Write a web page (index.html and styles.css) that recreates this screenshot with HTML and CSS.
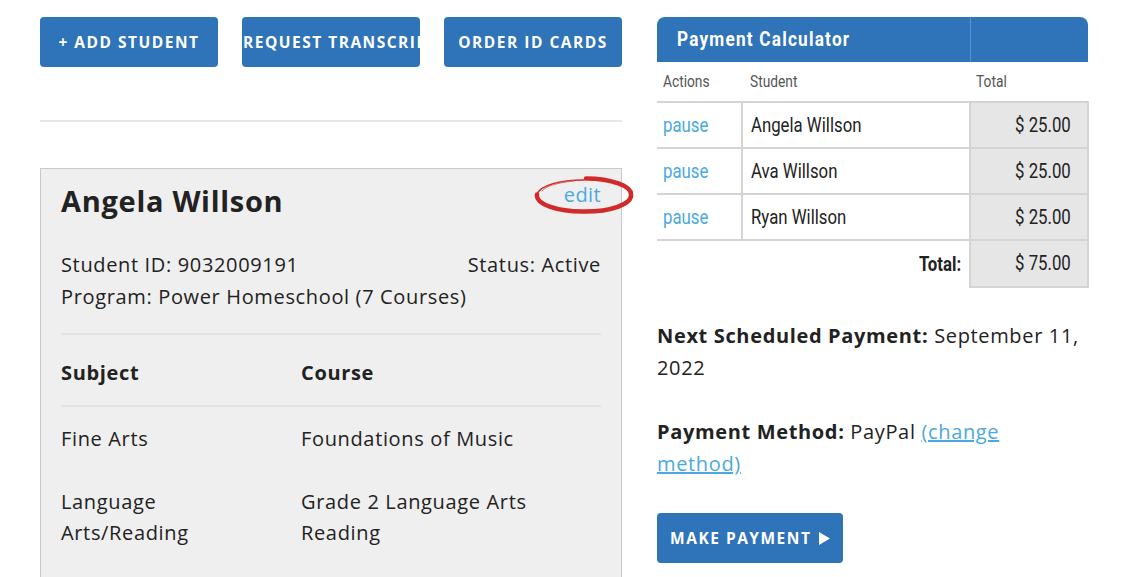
FILE: index.html
```html
<!DOCTYPE html>
<html>
<head>
<meta charset="utf-8">
<link rel="stylesheet" href="styles.css">
</head>
<body>
<div class="page">
  <div class="left">
    <div class="actions">
      <a class="btn">+ ADD STUDENT</a>
      <a class="btn">REQUEST TRANSCRIPT</a>
      <a class="btn">ORDER ID CARDS</a>
    </div>
    <div class="rule"></div>
    <div class="card">
      <div class="card-head">
        <h2 class="name">Angela Willson</h2>
        <a class="edit">edit
          <svg class="circle" width="100" height="38" viewBox="0 0 100 38">
            <path d="M52,2.5 A46,16 0 0 1 97,19 A46,16 0 0 1 50,35.5 A46,16 0 0 1 3,18.5" fill="none" stroke="#d22a2a" stroke-width="4.5" stroke-linecap="round"/>
            <path d="M3.5,18 A46,15 0 0 1 50,4" fill="none" stroke="#d22a2a" stroke-width="1.6" stroke-linecap="round"/>
            <path d="M8,15 A44,13 0 0 1 40,5" fill="none" stroke="#e06a6a" stroke-width="1" stroke-linecap="round"/>
          </svg>
        </a>
      </div>
      <div class="info">
        <div class="info-row"><span>Student ID: 9032009191</span><span>Status: Active</span></div>
        <div class="info-row"><span>Program: Power Homeschool (7 Courses)</span></div>
      </div>
      <div class="courses">
        <div class="course-row head"><span>Subject</span><span>Course</span></div>
        <div class="course-row"><span>Fine Arts</span><span>Foundations of Music</span></div>
        <div class="course-row"><span>Language<br>Arts/Reading</span><span>Grade 2 Language Arts<br>Reading</span></div>
      </div>
    </div>
  </div>
  <div class="right">
    <table class="calc">
      <thead>
        <tr class="title"><th colspan="2"><span class="sq">Payment Calculator</span></th><th class="title-end"></th></tr>
        <tr class="cols"><th class="c-act"><span class="sq">Actions</span></th><th class="c-stu"><span class="sq">Student</span></th><th class="c-tot"><span class="sq">Total</span></th></tr>
      </thead>
      <tbody>
        <tr><td class="act"><a class="sq">pause</a></td><td class="stu"><span class="sq">Angela Willson</span></td><td class="tot"><span class="sq r">$ 25.00</span></td></tr>
        <tr><td class="act"><a class="sq">pause</a></td><td class="stu"><span class="sq">Ava Willson</span></td><td class="tot"><span class="sq r">$ 25.00</span></td></tr>
        <tr><td class="act"><a class="sq">pause</a></td><td class="stu"><span class="sq">Ryan Willson</span></td><td class="tot"><span class="sq r">$ 25.00</span></td></tr>
        <tr class="sum"><td colspan="2" class="sum-label"><span class="sq r">Total:</span></td><td class="tot"><span class="sq r">$ 75.00</span></td></tr>
      </tbody>
    </table>
    <p class="detail"><b>Next Scheduled Payment:</b> September 11, 2022</p>
    <p class="detail"><b>Payment Method:</b> PayPal <a class="link">(change method)</a></p>
    <a class="btn pay">MAKE PAYMENT <svg class="tri" width="11" height="13" viewBox="0 0 11 13"><path d="M0,0 L11,6.5 L0,13 Z" fill="#fff"/></svg></a>
  </div>
</div>
</body>
</html>
```
FILE: styles.css
```css
* { box-sizing: border-box; }
html, body { margin: 0; padding: 0; background: #fff; }
body {
  font-family: "Open Sans", "DejaVu Sans", sans-serif;
  color: #222;
  overflow: hidden;
  height: 577px;
}
.page {
  display: flex;
  gap: 35px;
  padding: 17px 0 0 40px;
}
.left { width: 582px; flex: none; }
.right { width: 432px; flex: none; }

.actions { display: flex; gap: 24px; }
.btn {
  display: block;
  width: 178px;
  height: 50px;
  line-height: 50px;
  background: #2f73b8;
  border-radius: 4px;
  color: #fff;
  font-weight: 700;
  font-size: 15.5px;
  letter-spacing: 1.5px;
  text-align: center;
  white-space: nowrap;
  overflow: hidden;
  padding: 0 1px;
}
.rule {
  margin-top: 53px;
  border-top: 2px solid #e6e6e6;
}
.card {
  margin-top: 46px;
  border: 1px solid #c9c9c9;
  background: #efefef;
  padding: 12px 20px 40px 20px;
  height: 420px;
}
.card-head {
  display: flex;
  justify-content: space-between;
  align-items: flex-start;
}
.name {
  margin: 0;
  font-size: 29px;
  line-height: 40px;
  font-weight: 700;
  letter-spacing: 0.7px;
  color: #222;
}
.edit {
  position: relative;
  color: #4aa9e2;
  font-size: 20px;
  line-height: 26px;
  margin-top: 1px;
  letter-spacing: 0.4px;
}
.circle {
  position: absolute;
  left: -30px;
  top: -6px;
}
.info { margin-top: 28px; font-size: 20px; line-height: 32px; }
.info-row { display: flex; justify-content: space-between; }
.info, .courses { letter-spacing: 0.65px; }
.info { padding-bottom: 20px; border-bottom: 2px solid #e2e2e2; }
.courses { font-size: 20px; line-height: 31px; }
.course-row { display: grid; grid-template-columns: 240px 1fr; padding: 16px 0; }
.course-row.head {
  font-weight: 700;
  padding: 22px 0 17px;
  border-bottom: 2px solid #e2e2e2;
}

.sq {
  display: inline-block;
  transform: scaleX(0.86);
  transform-origin: left center;
  white-space: nowrap;
}
.sq.r { transform-origin: right center; }
.calc {
  width: 432px;
  border-collapse: collapse;
  font-family: "Roboto", "Liberation Sans", sans-serif;
  color: #222;
}
.calc .title th {
  background: #2f73b8;
  height: 45px;
  color: #fff;
  font-size: 20px;
  font-weight: 700;
  letter-spacing: 1.4px;
  text-align: left;
  padding: 0 0 2px 20px;
}
.calc .title th:first-child { border-top-left-radius: 8px; border-right: 1px solid #5b92cc; }
.calc .title th.title-end { border-top-right-radius: 8px; padding: 0; }
.calc .cols th {
  height: 40px;
  font-weight: 400;
  font-size: 16px;
  color: #555;
  text-align: left;
  padding: 0 0 0 6px;
  border-bottom: 2px solid #d4d4d4;
}
.calc .cols th.c-stu { padding-left: 8px; }
.c-act { width: 85px; }
.c-stu { width: 229px; }
.c-tot { width: 118px; }
.calc td {
  height: 46px;
  font-size: 19.5px;
  border-bottom: 2px solid #d4d4d4;
  padding: 0;
}
.calc td.act { padding-left: 6px; }
.calc td.act a { color: #4aa9e2; }
.calc td.stu { padding-left: 8px; border-left: 2px solid #d4d4d4; }
.calc td.tot {
  background: #e6e6e6;
  text-align: right;
  padding-right: 16px;
  border-left: 2px solid #d4d4d4;
  border-right: 2px solid #d4d4d4;
}
.calc .sum td { height: 47px; }
.calc .sum td.sum-label {
  text-align: right;
  font-weight: 700;
  padding-right: 8px;
  border-bottom: none;
}

.detail {
  margin: 32px 0 0 0;
  max-width: 425px;
  font-size: 20px;
  line-height: 32px;
  letter-spacing: 0.65px;
  color: #222;
}
.detail b { font-weight: 700; }
.link { color: #4aa9e2; text-decoration: underline; }
.btn.pay {
  margin-top: 33px;
  width: 186px;
  font-size: 15.5px;
}
.tri { vertical-align: -1px; margin-left: 2px; }
```
